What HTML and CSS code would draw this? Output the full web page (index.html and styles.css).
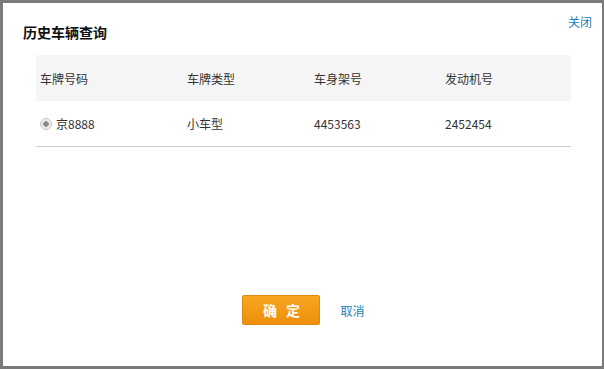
FILE: index.html
```html
<!DOCTYPE html>
<html lang="zh-CN">
<head>
    <meta charset="UTF-8">
    <title>历史车辆查询</title>
    <link rel="stylesheet" href="styles.css">
</head>
<body>
    <div class="dialog">
        <div class="dialog-head">
            <h2 class="dialog-title">历史车辆查询</h2>
            <a class="close-link" href="#">关闭</a>
        </div>

        <table class="car-table">
            <colgroup>
                <col class="col-plate">
                <col class="col-type">
                <col class="col-frame">
                <col>
            </colgroup>
            <thead>
                <tr>
                    <th>车牌号码</th>
                    <th>车牌类型</th>
                    <th>车身架号</th>
                    <th>发动机号</th>
                </tr>
            </thead>
            <tbody>
                <tr>
                    <td><span class="radio"></span>京8888</td>
                    <td>小车型</td>
                    <td>4453563</td>
                    <td>2452454</td>
                </tr>
            </tbody>
        </table>

        <div class="dialog-foot">
            <button class="btn-ok">确 定</button>
            <a class="cancel-link" href="#">取消</a>
        </div>
    </div>
</body>
</html>
```

FILE: styles.css
```css
html, body {
    margin: 0;
    padding: 0;
}
body {
    font-family: "Noto Sans CJK SC", "Liberation Sans", sans-serif;
    font-size: 12px;
    color: #333;
    background: #fff;
}
.dialog {
    box-sizing: border-box;
    width: 604px;
    height: 369px;
    border: 3px solid #7a7a7a;
    border-right-width: 2px;
    background: #fff;
    display: flex;
    flex-direction: column;
}
.dialog-head {
    display: flex;
    justify-content: space-between;
    align-items: flex-start;
    padding: 10px 10px 0 20px;
    height: 42px;
    box-sizing: border-box;
}
.dialog-title {
    margin: 9px 0 0;
    font-size: 14px;
    line-height: 20px;
    font-weight: bold;
    color: #111;
}
.close-link {
    color: #1b7fb3;
    text-decoration: none;
    line-height: 16px;
    margin-top: 1px;
}
.car-table {
    margin: 10px 0 0 33px;
    width: 535px;
    border-collapse: collapse;
    table-layout: fixed;
}
.col-plate { width: 147px; }
.col-type { width: 127px; }
.col-frame { width: 131px; }
.car-table th {
    background: #f5f5f5;
    font-weight: normal;
    text-align: left;
    height: 46px;
    padding: 0 4px;
}
.car-table td {
    height: 45px;
    padding: 0 4px;
    border-bottom: 1px solid #ccc;
}
.radio {
    display: inline-block;
    box-sizing: border-box;
    width: 12px;
    height: 12px;
    margin: 0 4px -1px 0;
    border-radius: 50%;
    border: 1px solid #c4c4c4;
    background: radial-gradient(circle, #8a8a8a 0, #8a8a8a 2.5px, #e9e9e9 3px, #f4f4f4 100%);
}
.dialog-foot {
    margin-top: auto;
    padding-bottom: 41px;
    display: flex;
    justify-content: center;
    align-items: center;
    gap: 20px;
    padding-left: 2px;
}
.btn-ok {
    width: 78px;
    height: 30px;
    border: 1px solid #e08a0c;
    border-radius: 2px;
    background: linear-gradient(#f7a623, #ee8f0a);
    color: #fff;
    font-family: inherit;
    font-size: 14px;
    font-weight: bold;
    letter-spacing: 3px;
    text-indent: 3px;
    cursor: pointer;
}
.cancel-link {
    color: #1b7fb3;
    text-decoration: none;
}
```
